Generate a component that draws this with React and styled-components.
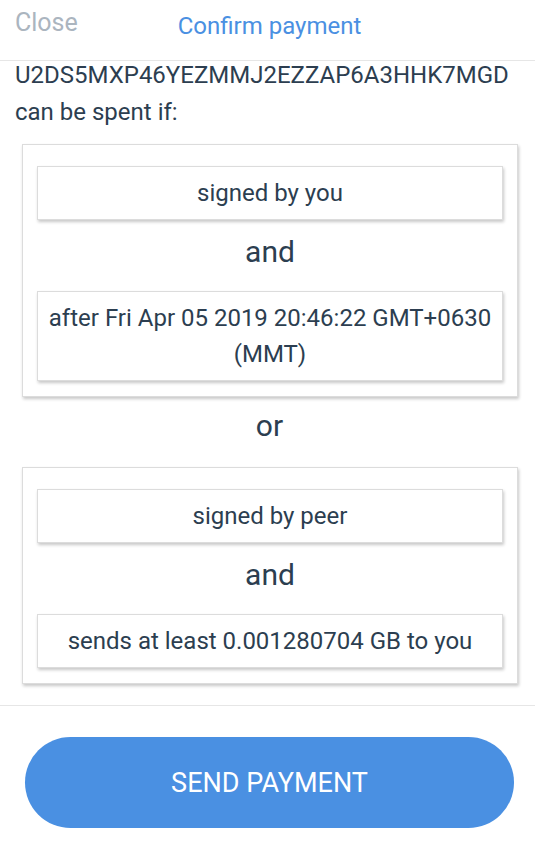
import styled, { createGlobalStyle } from "styled-components";

// global styles
// -------------

const GlobalStyle = createGlobalStyle`
  body {
    margin: 0;
    background: #ffffff;
    font-family: Roboto, "Liberation Sans", sans-serif;
    color: #2c3e50;
  }
`;

// data
// ----

const groups = [
  ["signed by you", "after Fri Apr 05 2019 20:46:22 GMT+0630 (MMT)"],
  ["signed by peer", "sends at least 0.001280704 GB to you"],
];

// styles
// ------

const Page = styled.div`
  width: 535px;
  height: 850px;
  display: flex;
  flex-direction: column;
  overflow: hidden;
`;

const Header = styled.div`
  height: 60px;
  display: grid;
  grid-template-columns: 1fr auto 1fr;
  align-items: start;
  border-bottom: 1px solid #e6e6e6;
  font-size: 24px;
  line-height: 36px;
`;

const CloseButton = styled.div`
  padding: 5px 0 0 15px;
  font-size: 25px;
  color: #abb5bf;
`;

const Title = styled.div`
  padding: 8px 0 0 4px;
  color: #4a90e2;
`;

const Intro = styled.div`
  margin-top: -4px;
  padding: 0 15px;
  font-size: 24px;
  line-height: 37px;
`;

const Group = styled.div`
  margin: ${(p) => (p.$first ? "13px" : "0")} 17px 0 22px;
  padding: 21px 14px 15px;
  border: 1px solid #dcdcdc;
  box-shadow: 1px 2px 3px rgba(0, 0, 0, 0.22);
  background: #fff;
`;

const Condition = styled.div`
  padding: 8px 10px;
  border: 1px solid #dcdcdc;
  box-shadow: 1px 2px 3px rgba(0, 0, 0, 0.22);
  text-align: center;
  font-size: 24px;
  line-height: 36px;
`;

const Joiner = styled.div`
  text-align: center;
  font-size: 30px;
  line-height: ${(p) => p.$line}px;
  margin-bottom: ${(p) => p.$after}px;
  padding-left: ${(p) => p.$shift || 0}px;
`;

const Footer = styled.div`
  margin-top: 21px;
  border-top: 1px solid #e6e6e6;
  padding: 31px 21px 0 25px;
`;

const SendButton = styled.button`
  width: 100%;
  height: 91px;
  border: none;
  border-radius: 46px;
  background: #4a90e2;
  color: #fff;
  font-family: Roboto, "Liberation Sans", sans-serif;
  font-size: 27px;
`;

// component
// ---------

const App = () => {
  return (
    <Page>
      <GlobalStyle />
      <Header>
        <CloseButton>Close</CloseButton>
        <Title>Confirm payment</Title>
        <div />
      </Header>
      <Intro>
        U2DS5MXP46YEZMMJ2EZZAP6A3HHK7MGD
        <br />
        can be spent if:
      </Intro>
      {groups.map((group, index) => (
        <div key={index}>
          {index > 0 && (
            <Joiner $line={58} $after={12} $shift={4}>
              or
            </Joiner>
          )}
          <Group $first={index === 0}>
            <Condition>{group[0]}</Condition>
            <Joiner $line={63} $after={8}>
              and
            </Joiner>
            <Condition>{group[1]}</Condition>
          </Group>
        </div>
      ))}
      <Footer>
        <SendButton>SEND PAYMENT</SendButton>
      </Footer>
    </Page>
  );
};

export default App;
